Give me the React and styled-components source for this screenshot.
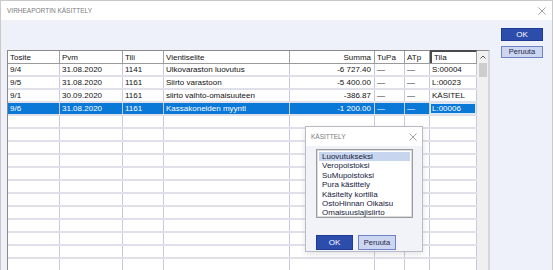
import React from 'react';
import styled, { createGlobalStyle } from 'styled-components';

const Global = createGlobalStyle`
  html, body { margin: 0; padding: 0; background: #fff; }
  body {
    font-family: "Liberation Sans", Arial, sans-serif;
    font-size: 8px;
    color: #111;
    overflow: hidden;
  }
  * { box-sizing: border-box; }
`;

const Window = styled.div`
  position: relative;
  width: 553px;
  height: 270px;
  border: 1px solid #c9c9c9;
  border-bottom: none;
  display: flex;
  flex-direction: column;
  overflow: hidden;
  background: #eef1f9;
`;

const TitleBar = styled.div`
  height: 19px;
  flex: none;
  background: #fff;
  display: flex;
  align-items: center;
  justify-content: space-between;
  padding: 0 ${(p) => p.$padRight ?? 6}px 0 ${(p) => p.$padLeft ?? 6}px;
`;

const TitleText = styled.span`
  font-size: 6.5px;
  color: #7a7a7a;
  letter-spacing: 0;
`;

const Body = styled.div`
  flex: 1;
  display: flex;
  align-items: flex-start;
  padding: 8px 0 0 6px;
`;

const GridFrame = styled.div`
  margin-top: 22px;
  display: flex;
  border-left: 1px solid #8a8a8a;
  border-top: 1px solid #8a8a8a;
  border-right: 2px solid #d6d7de;
  height: 240px;
  background: #fff;
`;

const Columns = styled.div`
  width: 469px;
  display: flex;
  flex-direction: column;
`;

const Row = styled.div`
  display: flex;
  flex: none;
  height: ${(p) => (p.$header ? 13 : 13)}px;
  border-bottom: ${(p) => (p.$header ? '1px solid #9a9a9a' : '2px solid #dfe0e9')};
  background: ${(p) => (p.$selected ? '#0a78d6' : '#fff')};
  color: ${(p) => (p.$selected ? '#fff' : '#111')};
`;

const Cell = styled.div`
  flex: none;
  width: ${(p) => p.$w}px;
  display: flex;
  align-items: center;
  justify-content: ${(p) => (p.$right ? 'flex-end' : 'flex-start')};
  padding: 0 ${(p) => (p.$right ? 3 : 2)}px 0 2px;
  border-right: 1px solid ${(p) => (p.$header ? '#a0a0a8' : '#c9c9df')};
  white-space: nowrap;
  overflow: hidden;
  ${(p) => p.$focusHead && `
    border-top: 2px solid #4a4a4a;
    border-left: 2px solid #4a4a4a;
    margin-top: -1px;
  `}
  ${(p) => p.$focusCell && `
    box-shadow: inset 0 0 0 1px rgba(255,255,255,0.85);
  `}
`;

const Scrollbar = styled.div`
  width: 11px;
  background: #f0f0f0;
  display: flex;
  flex-direction: column;
  align-items: center;
`;

const ScrollArrow = styled.div`
  height: 12px;
  width: 100%;
  display: flex;
  align-items: center;
  justify-content: center;
`;

const ScrollThumb = styled.div`
  width: 8px;
  height: 14px;
  background: #cdcdcd;
`;

const SidePanel = styled.div`
  margin-left: 11px;
  display: flex;
  flex-direction: column;
  gap: 5px;
`;

const Button = styled.button`
  font-family: "Liberation Sans", Arial, sans-serif;
  font-size: ${(p) => (p.$primary ? 8 : 7.5)}px;
  width: ${(p) => p.$w}px;
  height: ${(p) => p.$h}px;
  padding: 0;
  margin: 0;
  line-height: 1;
  border: 1px solid ${(p) => (p.$primary ? '#1f3a91' : '#7082c6')};
  background: ${(p) => (p.$primary ? '#2d4dad' : '#ccd6f1')};
  color: ${(p) => (p.$primary ? '#fff' : '#22264a')};
  cursor: default;
`;

const Dialog = styled.div`
  position: absolute;
  left: 304px;
  top: 125px;
  width: 118px;
  height: 126px;
  border: 1px solid #b9bac8;
  background: #f1f3f9;
  box-shadow: 0 2px 6px rgba(0, 0, 0, 0.12);
  display: flex;
  flex-direction: column;
`;

const DialogBody = styled.div`
  padding: 3px 0 0 10px;
  display: flex;
  flex-direction: column;
`;

const ListBox = styled.div`
  width: 97px;
  height: 69px;
  border: 1px solid #9c9c9c;
  box-shadow: inset 0 0 0 1px #dcdcdc;
  background: #fff;
  padding: 2px;
  display: flex;
  flex-direction: column;
`;

const ListItem = styled.div`
  height: 9.4px;
  line-height: 9.4px;
  padding-left: 3px;
  white-space: nowrap;
  background: ${(p) => (p.$selected ? '#c8d5ef' : 'transparent')};
  color: #151a3a;
`;

const DialogButtons = styled.div`
  display: flex;
  gap: 5px;
  margin-top: 17px;
`;

const CloseIcon = ({ size = 8, color = '#8a8a8a' }) => (
  <svg width={size} height={size} viewBox="0 0 8 8">
    <path d="M0.5 0.5 L7.5 7.5 M7.5 0.5 L0.5 7.5" stroke={color} strokeWidth="0.8" fill="none" />
  </svg>
);

const cols = [
  { key: 'tosite', label: 'Tosite', w: 52 },
  { key: 'pvm', label: 'Pvm', w: 63 },
  { key: 'tili', label: 'Tili', w: 41 },
  { key: 'selite', label: 'Vientiselite', w: 126 },
  { key: 'summa', label: 'Summa', w: 85, right: true },
  { key: 'tupa', label: 'TuPa', w: 30 },
  { key: 'atp', label: 'ATp', w: 25 },
  { key: 'tila', label: 'Tila', w: 47 },
];

const rows = [
  { tosite: '9/4', pvm: '31.08.2020', tili: '1141', selite: 'Ulkovaraston luovutus', summa: '-6 727.40', tupa: '—', atp: '—', tila: 'S:00004' },
  { tosite: '9/5', pvm: '31.08.2020', tili: '1161', selite: 'Siirto varastoon', summa: '-5 400.00', tupa: '—', atp: '—', tila: 'L:00023' },
  { tosite: '9/1', pvm: '30.09.2020', tili: '1161', selite: 'siirto vaihto-omaisuuteen', summa: '-386.87', tupa: '—', atp: '—', tila: 'KÄSITEL' },
  { tosite: '9/6', pvm: '31.08.2020', tili: '1161', selite: 'Kassakoneiden myynti', summa: '-1 200.00', tupa: '—', atp: '—', tila: 'L:00006', selected: true },
];

const emptyRows = Array.from({ length: 12 }, (_, i) => i);

const options = [
  'Luovutukseksi',
  'Veropoistoksi',
  'SuMupoistoksi',
  'Pura käsittely',
  'Käsitelty kortilla',
  'OstoHinnan Oikaisu',
  'Omaisuuslajisiirto',
];

export default function App() {
  return (
    <>
      <Global />
      <Window>
        <TitleBar>
          <TitleText>VIRHEAPORTIN KÄSITTELY</TitleText>
          <CloseIcon />
        </TitleBar>
        <Body>
          <GridFrame>
            <Columns>
              <Row $header>
                {cols.map((c) => (
                  <Cell key={c.key} $w={c.w} $right={c.right} $header $focusHead={c.key === 'tila'}>
                    {c.label}
                  </Cell>
                ))}
              </Row>
              {rows.map((r, i) => (
                <Row key={i} $selected={r.selected}>
                  {cols.map((c) => (
                    <Cell key={c.key} $w={c.w} $right={c.right} $focusCell={r.selected && c.key === 'tila'}>
                      {r[c.key]}
                    </Cell>
                  ))}
                </Row>
              ))}
              {emptyRows.map((i) => (
                <Row key={`e${i}`}>
                  {cols.map((c) => (
                    <Cell key={c.key} $w={c.w} />
                  ))}
                </Row>
              ))}
            </Columns>
            <Scrollbar>
              <ScrollArrow>
                <svg width="6" height="4" viewBox="0 0 6 4">
                  <path d="M0.5 3.5 L3 1 L5.5 3.5" stroke="#555" strokeWidth="1" fill="none" />
                </svg>
              </ScrollArrow>
              <ScrollThumb />
            </Scrollbar>
          </GridFrame>
          <SidePanel>
            <Button $primary $w={42} $h={13}>OK</Button>
            <Button $w={42} $h={12}>Peruuta</Button>
          </SidePanel>
        </Body>
        <Dialog>
          <TitleBar $padLeft={5} $padRight={5}>
            <TitleText>KÄSITTELY</TitleText>
            <CloseIcon size={8} />
          </TitleBar>
          <DialogBody>
            <ListBox>
              {options.map((o, i) => (
                <ListItem key={o} $selected={i === 0}>{o}</ListItem>
              ))}
            </ListBox>
            <DialogButtons>
              <Button $primary $w={37} $h={15}>OK</Button>
              <Button $w={38} $h={15}>Peruuta</Button>
            </DialogButtons>
          </DialogBody>
        </Dialog>
      </Window>
    </>
  );
}
